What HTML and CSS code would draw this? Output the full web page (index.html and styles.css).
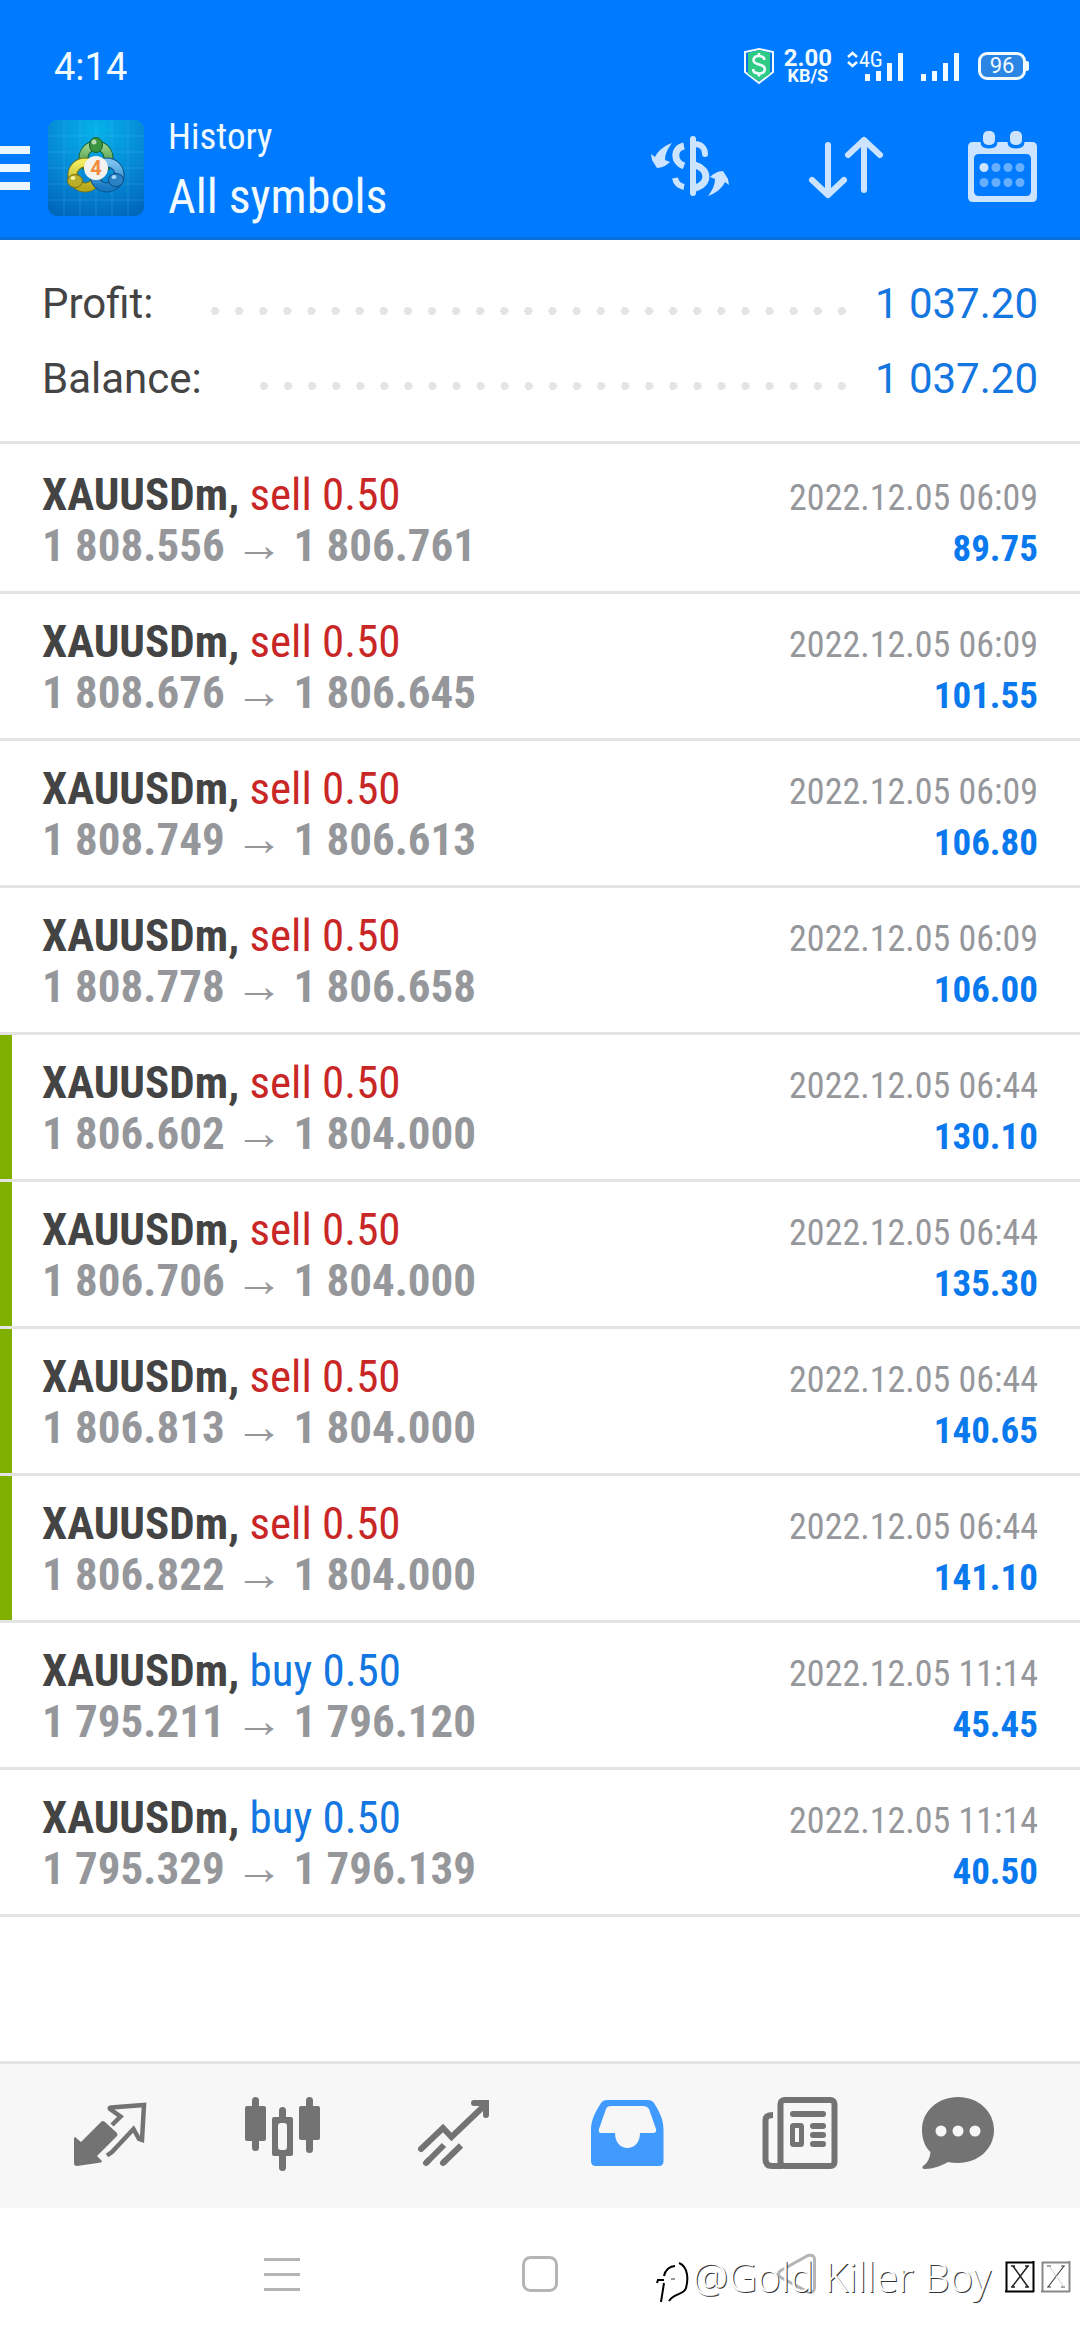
FILE: index.html
```html
<!DOCTYPE html>
<html lang="en">
<head>
<meta charset="utf-8">
<meta name="viewport" content="width=device-width">
<title>History</title>
<link rel="stylesheet" href="styles.css">
</head>
<body>
<div class="app">
  <header class="header">
    <div class="status">
      <span class="clock">4:14</span>
      <svg class="status-shield" width="30" height="36" viewBox="0 0 30 36" aria-hidden="true">
        <path d="M15 1L29 4V24L15 35L1 24V4Z" fill="#0a72e8" stroke="#f0faff" stroke-width="2"/>
        <path d="M15 2L26 5V26L15 33L4 26V5Z" fill="#2dcb84"/>
        <path d="M20.500 12C20 8.500 17.500 8 15 8C11.500 8 9.500 9.500 9.500 12.300C9.500 18 20.800 15 20.800 21C20.800 24 18.500 25.500 15 25.500C11.800 25.500 9.300 24 9 21M15 5V8M15 25.500V28.500" fill="none" stroke="#f0faff" stroke-width="2.600"/>
      </svg>
      <span class="speed"><b>2.00</b><b class="speed-unit">KB/S</b></span>
      <svg class="status-signal" width="114" height="32" viewBox="0 0 114 32" role="img" aria-label="4G signal">
        <path d="M2 7L6.500 3L11 7M2 12L6.500 16L11 12" fill="none" stroke="#f0faff" stroke-width="2.600"/>
        <text class="signal-text" x="13" y="17">4G</text>
        <path d="M21.500 31V24M32.500 31V21M43.500 31V13M54.500 31V3M77.500 31V24M88.500 31V21M99.500 31V13M110.500 31V3" fill="none" stroke="#f0faff" stroke-width="5" stroke-linecap="butt"/>
      </svg>
      <span class="battery">96</span>
    </div>
    <div class="toolbar">
      <button class="menu" type="button" aria-label="Menu">
        <svg width="30" height="44" viewBox="0 0 30 44"><path d="M0 4H30M0 22H30M0 40H30" stroke="#ebf6ff" stroke-width="8"/></svg>
      </button>
      <svg class="logo" width="96" height="96" viewBox="0 0 96 96" role="img" aria-label="MetaTrader 4">
        <defs>
          <radialGradient id="sky" cx=".5" cy=".1" r=".95"><stop offset="0" stop-color="#04b2ea"/><stop offset=".6" stop-color="#0686d4"/><stop offset="1" stop-color="#0068bc"/></radialGradient>
          <linearGradient id="green" x1="0" y1="0" x2="0" y2="1"><stop offset="0" stop-color="#9bd08a"/><stop offset="1" stop-color="#2c8a33"/></linearGradient>
          <linearGradient id="yellow" x1="0" y1="0" x2="0" y2="1"><stop offset="0" stop-color="#f2ec62"/><stop offset="1" stop-color="#b5a81c"/></linearGradient>
          <linearGradient id="blue" x1="0" y1="0" x2="0" y2="1"><stop offset="0" stop-color="#7cc2ee"/><stop offset="1" stop-color="#1778c2"/></linearGradient>
        </defs>
        <rect width="96" height="96" rx="9" fill="url(#sky)"/>
        <path d="M16 0V96M32 0V96M48 0V96M64 0V96M80 0V96M0 16H96M0 32H96M0 48H96M0 64H96M0 80H96" stroke="#5cc4f4" stroke-opacity=".25"/>
        <circle cx="48" cy="38" r="12.500" fill="none" stroke="#14602a" stroke-width="10"/>
        <circle cx="48" cy="38" r="12.500" fill="none" stroke="url(#green)" stroke-width="8"/>
        <circle cx="37" cy="55" r="12.500" fill="none" stroke="#77700e" stroke-width="10"/>
        <circle cx="37" cy="55" r="12.500" fill="none" stroke="url(#yellow)" stroke-width="8"/>
        <circle cx="59" cy="55" r="12.500" fill="none" stroke="#0b4c86" stroke-width="10"/>
        <circle cx="59" cy="55" r="12.500" fill="none" stroke="url(#blue)" stroke-width="8"/>
        <ellipse cx="48" cy="25" rx="6.500" ry="7.500" fill="#3b9440" stroke="#14602a"/>
        <ellipse cx="27" cy="61" rx="7.500" ry="6.500" fill="#b9ae28" stroke="#77700e"/>
        <ellipse cx="68" cy="60" rx="7.500" ry="6.500" fill="#2a82c4" stroke="#0b4c86"/>
        <ellipse cx="46" cy="22" rx="2.500" ry="2.500" fill="#b5dcae"/>
        <ellipse cx="25" cy="58" rx="2.500" ry="2" fill="#f4f0a4"/>
        <ellipse cx="66" cy="57" rx="2.500" ry="2" fill="#a9d7f4"/>
        <circle cx="48" cy="48" r="12" fill="#f4f2ee"/>
        <text class="logo-digit" x="48" y="55">4</text>
      </svg>
      <div class="titles">
        <span class="subtitle">History</span>
        <h1 class="title">All symbols</h1>
      </div>
      <button class="action" type="button" aria-label="Currency">
        <svg width="78" height="72" viewBox="0 0 78 72">
          <g fill="none" stroke="#cce4ff" stroke-width="6">
            <path d="M42 7V61M54 22C54 16 50 12 44 12" stroke-linecap="round"/>
            <path d="M44 33C58 37 59 52 44 56M33 14C22 16 22 30 33 34" stroke-width="7"/>
            <path d="M24 46C25 51 28 54 33 55"/>
          </g>
          <path d="M21 11C15 13 7 18 4 25L0 22L1 28L6 36C11 36 16 33 19 30L14 28C14 22 17 16 21 11Z" fill="#cce4ff"/>
          <path d="M57 64C63 62 71 57 74 50L78 53L77 47L72 39C67 39 62 42 59 45L64 47C64 53 61 59 57 64Z" fill="#cce4ff"/>
        </svg>
      </button>
      <button class="action" type="button" aria-label="Sort">
        <svg width="78" height="72" viewBox="0 0 78 72">
          <path d="M21 13V63M5 48L21 63L37 48M57 58V8M41 23L57 8L73 23" fill="none" stroke="#cce4ff" stroke-width="6" stroke-linecap="round" stroke-linejoin="round"/>
        </svg>
      </button>
      <button class="action" type="button" aria-label="Period">
        <svg width="78" height="72" viewBox="0 0 78 72">
          <path fill-rule="evenodd" d="M10 10H69Q74 10 74 15V65Q74 70 69 70H10Q5 70 5 65V15Q5 10 10 10ZM16 22Q11 22 11 27V59Q11 64 16 64H63Q68 64 68 59V27Q68 22 63 22Z" fill="#cce4ff"/>
          <path d="M20 -1H32V10Q32 14 26 14Q20 14 20 10ZM47 -1H59V10Q59 14 53 14Q47 14 47 10Z" fill="#007aff" stroke="#007aff" stroke-width="5"/>
          <rect x="20" y="-1" width="12" height="14" rx="5" fill="#cce4ff"/><rect x="47" y="-1" width="12" height="14" rx="5" fill="#cce4ff"/>
          <g fill="#66afff"><circle cx="33" cy="35.500" r="4.500"/><circle cx="45" cy="35.500" r="4.500"/><circle cx="57" cy="35.500" r="4.500"/><circle cx="21" cy="50.500" r="4.500"/><circle cx="33" cy="50.500" r="4.500"/><circle cx="45" cy="50.500" r="4.500"/><circle cx="57" cy="50.500" r="4.500"/></g>
          <circle cx="21" cy="35.500" r="4.500" fill="#cce4ff"/>
        </svg>
      </button>
    </div>
  </header>

  <main class="content">
    <dl class="summary">
      <div class="summary-row"><dt>Profit:</dt><dd>1 037.20</dd></div>
      <div class="summary-row"><dt>Balance:</dt><dd>1 037.20</dd></div>
    </dl>
    <ul class="deals">
      <li class="deal">
        <div class="line"><span><b>XAUUSDm,</b> <span class="sell">sell 0.50</span></span><time class="time">2022.12.05 06:09</time></div>
        <div class="line"><span class="prices">1 808.556 <span class="arrow">→</span> 1 806.761</span><b class="profit">89.75</b></div>
      </li>
      <li class="deal">
        <div class="line"><span><b>XAUUSDm,</b> <span class="sell">sell 0.50</span></span><time class="time">2022.12.05 06:09</time></div>
        <div class="line"><span class="prices">1 808.676 <span class="arrow">→</span> 1 806.645</span><b class="profit">101.55</b></div>
      </li>
      <li class="deal">
        <div class="line"><span><b>XAUUSDm,</b> <span class="sell">sell 0.50</span></span><time class="time">2022.12.05 06:09</time></div>
        <div class="line"><span class="prices">1 808.749 <span class="arrow">→</span> 1 806.613</span><b class="profit">106.80</b></div>
      </li>
      <li class="deal">
        <div class="line"><span><b>XAUUSDm,</b> <span class="sell">sell 0.50</span></span><time class="time">2022.12.05 06:09</time></div>
        <div class="line"><span class="prices">1 808.778 <span class="arrow">→</span> 1 806.658</span><b class="profit">106.00</b></div>
      </li>
      <li class="deal marked">
        <div class="line"><span><b>XAUUSDm,</b> <span class="sell">sell 0.50</span></span><time class="time">2022.12.05 06:44</time></div>
        <div class="line"><span class="prices">1 806.602 <span class="arrow">→</span> 1 804.000</span><b class="profit">130.10</b></div>
      </li>
      <li class="deal marked">
        <div class="line"><span><b>XAUUSDm,</b> <span class="sell">sell 0.50</span></span><time class="time">2022.12.05 06:44</time></div>
        <div class="line"><span class="prices">1 806.706 <span class="arrow">→</span> 1 804.000</span><b class="profit">135.30</b></div>
      </li>
      <li class="deal marked">
        <div class="line"><span><b>XAUUSDm,</b> <span class="sell">sell 0.50</span></span><time class="time">2022.12.05 06:44</time></div>
        <div class="line"><span class="prices">1 806.813 <span class="arrow">→</span> 1 804.000</span><b class="profit">140.65</b></div>
      </li>
      <li class="deal marked">
        <div class="line"><span><b>XAUUSDm,</b> <span class="sell">sell 0.50</span></span><time class="time">2022.12.05 06:44</time></div>
        <div class="line"><span class="prices">1 806.822 <span class="arrow">→</span> 1 804.000</span><b class="profit">141.10</b></div>
      </li>
      <li class="deal">
        <div class="line"><span><b>XAUUSDm,</b> <span class="buy">buy 0.50</span></span><time class="time">2022.12.05 11:14</time></div>
        <div class="line"><span class="prices">1 795.211 <span class="arrow">→</span> 1 796.120</span><b class="profit">45.45</b></div>
      </li>
      <li class="deal">
        <div class="line"><span><b>XAUUSDm,</b> <span class="buy">buy 0.50</span></span><time class="time">2022.12.05 11:14</time></div>
        <div class="line"><span class="prices">1 795.329 <span class="arrow">→</span> 1 796.139</span><b class="profit">40.50</b></div>
      </li>
    </ul>
  </main>

  <nav class="tabs">
    <button class="tab" type="button" aria-label="Quotes">
      <svg width="78" height="78" viewBox="0 0 78 78">
        <path d="M3 41L4 40L10 45L30 25Q32 23 34 25L46 36Q47 38 46 39L26 59L31 64L30 65.500L6 69Q3 69 3 66Z" fill="#737373"/>
        <path d="M41 28L49.500 19.500L39 12Q38 10.500 40 10.500L73 8L71 43L68 42L62.500 32L41 55L36 58.500" fill="none" stroke="#737373" stroke-width="4.500"/>
      </svg>
    </button>
    <button class="tab" type="button" aria-label="Charts">
      <svg width="78" height="78" viewBox="0 0 78 78" fill="#737373">
        <rect x="2" y="9" width="21" height="35" rx="2"/><rect x="9" y="0" width="7" height="54" rx="3.500"/>
        <rect x="56" y="9" width="21" height="34" rx="2"/><rect x="63" y="0" width="7" height="56" rx="3.500"/>
        <rect x="36" y="10" width="7" height="14" rx="3.500"/><rect x="36" y="56" width="7" height="18" rx="3.500"/>
        <path fill-rule="evenodd" d="M31 20H48Q50 20 50 22V57Q50 59 48 59H31Q29 59 29 57V22Q29 20 31 20ZM38 26Q35 26 35 29V50Q35 53 38 53H41Q44 53 44 50V29Q44 26 41 26Z"/>
      </svg>
    </button>
    <button class="tab" type="button" aria-label="Trade">
      <svg width="78" height="78" viewBox="0 0 78 78" fill="none" stroke="#737373" stroke-width="6">
        <path d="M6 52L28 31L36.500 40L71 7M59 6H71V18M11 66L13 64M28 66L30 64" stroke-linecap="round"/>
        <path d="M11 66L29 48M28 66L46 48.500"/>
      </svg>
    </button>
    <button class="tab" type="button" aria-label="History" aria-current="page">
      <svg width="78" height="78" viewBox="0 0 78 78">
        <path fill-rule="evenodd" d="M20 3H61Q65 3 67 6C72 14 76.500 22 76.500 33V64Q76.500 69 72 69H9Q4 69 4 64V33C4 22 9 14 14 6Q16 3 20 3ZM24 9Q20 9 19 12L12 32Q11 36 14 36H28C28 56 53 56 53 36H66Q70 36 69 32L62 12Q60 9 56 9Z" fill="#419bff"/>
      </svg>
    </button>
    <button class="tab" type="button" aria-label="News">
      <svg width="78" height="78" viewBox="0 0 78 78" fill="none" stroke="#737373" stroke-width="6">
        <g transform="translate(2 0)">
          <rect x="19.500" y="3" width="54" height="66" rx="4"/>
          <path d="M12 18Q4.500 18 4.500 23V62Q4.500 69 11 69H22"/>
          <path d="M32 17H62M52 29H62M52 38H62M52 47H62" stroke-linecap="round"/>
          <rect x="31.500" y="28.500" width="9" height="19" stroke-width="5" rx="1"/>
        </g>
      </svg>
    </button>
    <button class="tab tab-last" type="button" aria-label="Messages">
      <svg width="78" height="78" viewBox="0 0 78 78">
        <path d="M39 0C59 0 75 14 75 33C75 52 59 66 39 66Q33 66 29 65C22 69 14 72 6 72Q2 72 4 69C9 66 11 60 11.500 55C6 50 3 42 3 33C3 14 19 0 39 0Z" fill="#737373"/>
        <g fill="#f7f7f7"><circle cx="22" cy="34" r="5.500"/><circle cx="39" cy="34" r="5.500"/><circle cx="56" cy="34" r="5.500"/></g>
      </svg>
    </button>
  </nav>

  <footer class="system">
    <button class="key" type="button" aria-label="Recent apps">
      <svg width="42" height="42" viewBox="0 0 42 42" stroke="#b5b5b5" stroke-width="3"><path d="M3 6.500H39M3 21.500H39M3 36.500H39"/></svg>
    </button>
    <button class="key" type="button" aria-label="Home">
      <svg width="42" height="42" viewBox="0 0 42 42" fill="none" stroke="#b5b5b5" stroke-width="3"><rect x="4.500" y="4.500" width="33" height="33" rx="7"/></svg>
    </button>
    <button class="key" type="button" aria-label="Back">
      <svg width="42" height="42" viewBox="0 0 42 42" fill="none" stroke="#b5b5b5" stroke-width="3"><path d="M3 18L31 2.500Q37 1 37.500 6V35Q37 41 31 39L3 24Q0 21 3 18Z"/></svg>
    </button>
    <div class="watermark">
      <svg width="36" height="48" viewBox="0 0 36 48" fill="none" aria-hidden="true">
        <path d="M4 49L7 30M0 30L1 27H7M7 23C8 17 13 13 18 13M22 10C32 14 31 28 29 35C27 42 17 40 12 48" stroke="#000" stroke-width="2"/>
        <path d="M14 26H18" stroke="#999" stroke-width="2"/>
      </svg>
      <span>@Gold Killer Boy</span>
      <svg class="tofu" width="66" height="32" viewBox="0 0 66 32" fill="none" aria-hidden="true">
        <path d="M1.500 31V1.500H28M28.500 0V31M0 30.500H29" stroke="#000" stroke-width="2"/>
        <path d="M8 5L23 26M23 5L7 26M6 5H10M20 5H24M6 26H10M20 26H24" stroke="#222" stroke-width="1.500"/>
        <path d="M37.500 31V1.500H64M64.500 0V31M36 30.500H65" stroke="#888" stroke-width="2"/>
        <path d="M59 5L43 26M42 5H46M56 5H60M42 26H46M56 26H60" stroke="#444" stroke-width="1.200"/><path d="M44 5L59 26" stroke="#ccc"/>
      </svg>
    </div>
  </footer>
</div>
</body>
</html>
```
FILE: styles.css
```css
* {
  box-sizing: border-box;
}

body {
  margin: 0;
  background: #fff;
  color: #444;
  font-family: "Roboto Condensed", Roboto, sans-serif;
}

button {
  display: flex;
  align-items: center;
  justify-content: center;
  padding: 0;
  border: 0;
  background: none;
}

svg {
  display: block;
  flex: none;
  overflow: visible;
}

.app {
  display: flex;
  flex-direction: column;
  min-height: 100vh;
}

/* Header */
.header {
  background: #007aff;
  color: #f0faff;
  border-bottom: 3px solid #0a6edd;
}

.status {
  display: flex;
  align-items: center;
  height: 96px;
  padding: 36px 54px 0 54px;
}

.clock {
  margin-right: auto;
  padding-top: 2px;
  font: 38px/60px Roboto, sans-serif;
}

.speed {
  display: flex;
  flex-direction: column;
  align-items: center;
  margin: 0 14px 0 10px;
  font: 24px/20px Roboto, sans-serif;
}

.speed-unit {
  font-size: 18px;
  line-height: 16px;
}

.signal-text {
  fill: #f0faff;
  font-size: 22px;
}

.status-signal {
  margin-right: 18px;
}

.battery {
  position: relative;
  width: 48px;
  border: 3px solid #f0faff;
  border-radius: 9px;
  background: #2a85e4;
  font: 22px/22px Roboto, sans-serif;
  text-align: center;
}

.battery::after {
  content: "";
  position: absolute;
  top: 6px;
  right: -6px;
  width: 3px;
  height: 10px;
  border-radius: 0 2px 2px 0;
  background: #f0faff;
}

.toolbar {
  display: flex;
  align-items: center;
  height: 141px;
  padding-top: 3px;
}

.logo {
  margin-left: 18px;
}

.logo-digit {
  fill: #f08c3c;
  font: bold 20px Roboto, sans-serif;
  text-anchor: middle;
}

.titles {
  display: flex;
  flex-direction: column;
  flex: 1;
  padding-left: 24px;
}

.subtitle {
  font-size: 37px;
  line-height: 57px;
}

.title {
  margin: 0;
  font-size: 48px;
  font-weight: 400;
  line-height: 63px;
}

.action {
  width: 156px;
  height: 138px;
}

/* Totals */
.content {
  flex: 1;
}

.summary {
  margin: 0;
  padding: 26px 42px 25px;
  border-bottom: 3px solid #e4e4e4;
  font: 42px/75px Roboto, sans-serif;
}

.summary-row {
  display: flex;
}

.summary-row::before {
  content: "";
  order: 1;
  flex: 1;
  margin: 0 21px 0 50px;
  background: radial-gradient(circle at 12px 45px, #e4e4e4 4px, transparent 4px) right top / 24px 75px space no-repeat;
}

.summary dd {
  order: 2;
  margin: 0;
  color: #1476e0;
}

/* Deals */
.deals {
  margin: 0;
  padding: 3px 0 0;
  list-style: none;
}

.deal {
  position: relative;
  padding: 22px 42px 20px;
  border-bottom: 3px solid #e4e4e4;
  font-size: 45px;
  line-height: 51px;
}

.marked::before {
  content: "";
  position: absolute;
  top: 0;
  bottom: 0;
  left: 0;
  width: 12px;
  background: #7fb000;
}

.line {
  display: flex;
  justify-content: space-between;
  align-items: baseline;
  height: 51px;
}

.sell {
  color: #c92626;
}

.buy {
  color: #1476e0;
}

.prices {
  color: #96979b;
  font-weight: 700;
}

.arrow {
  font: 48px/33px "Liberation Sans", sans-serif;
}

.time {
  color: #96979b;
  font-size: 36px;
}

.profit {
  color: #0a79ee;
  font-size: 37px;
}

/* Bottom tabs */
.tabs {
  display: flex;
  height: 147px;
  padding: 0 48px 0 24px;
  border-top: 3px solid #e4e4e4;
  background: #f7f7f7;
}

.tab {
  flex: 43;
}

.tab-last {
  flex: 37;
}

/* System navigation */
.system {
  position: relative;
  display: grid;
  grid-template-columns: repeat(3, 258px);
  justify-content: center;
  height: 132px;
}

.watermark {
  position: absolute;
  top: 42px;
  right: 9px;
  display: flex;
  align-items: center;
  height: 54px;
  color: #fff;
  font: 300 40px/54px "Noto Sans", sans-serif;
  text-shadow: 1px 1px 0 #333;
}

.tofu {
  margin-left: 14px;
}
```
